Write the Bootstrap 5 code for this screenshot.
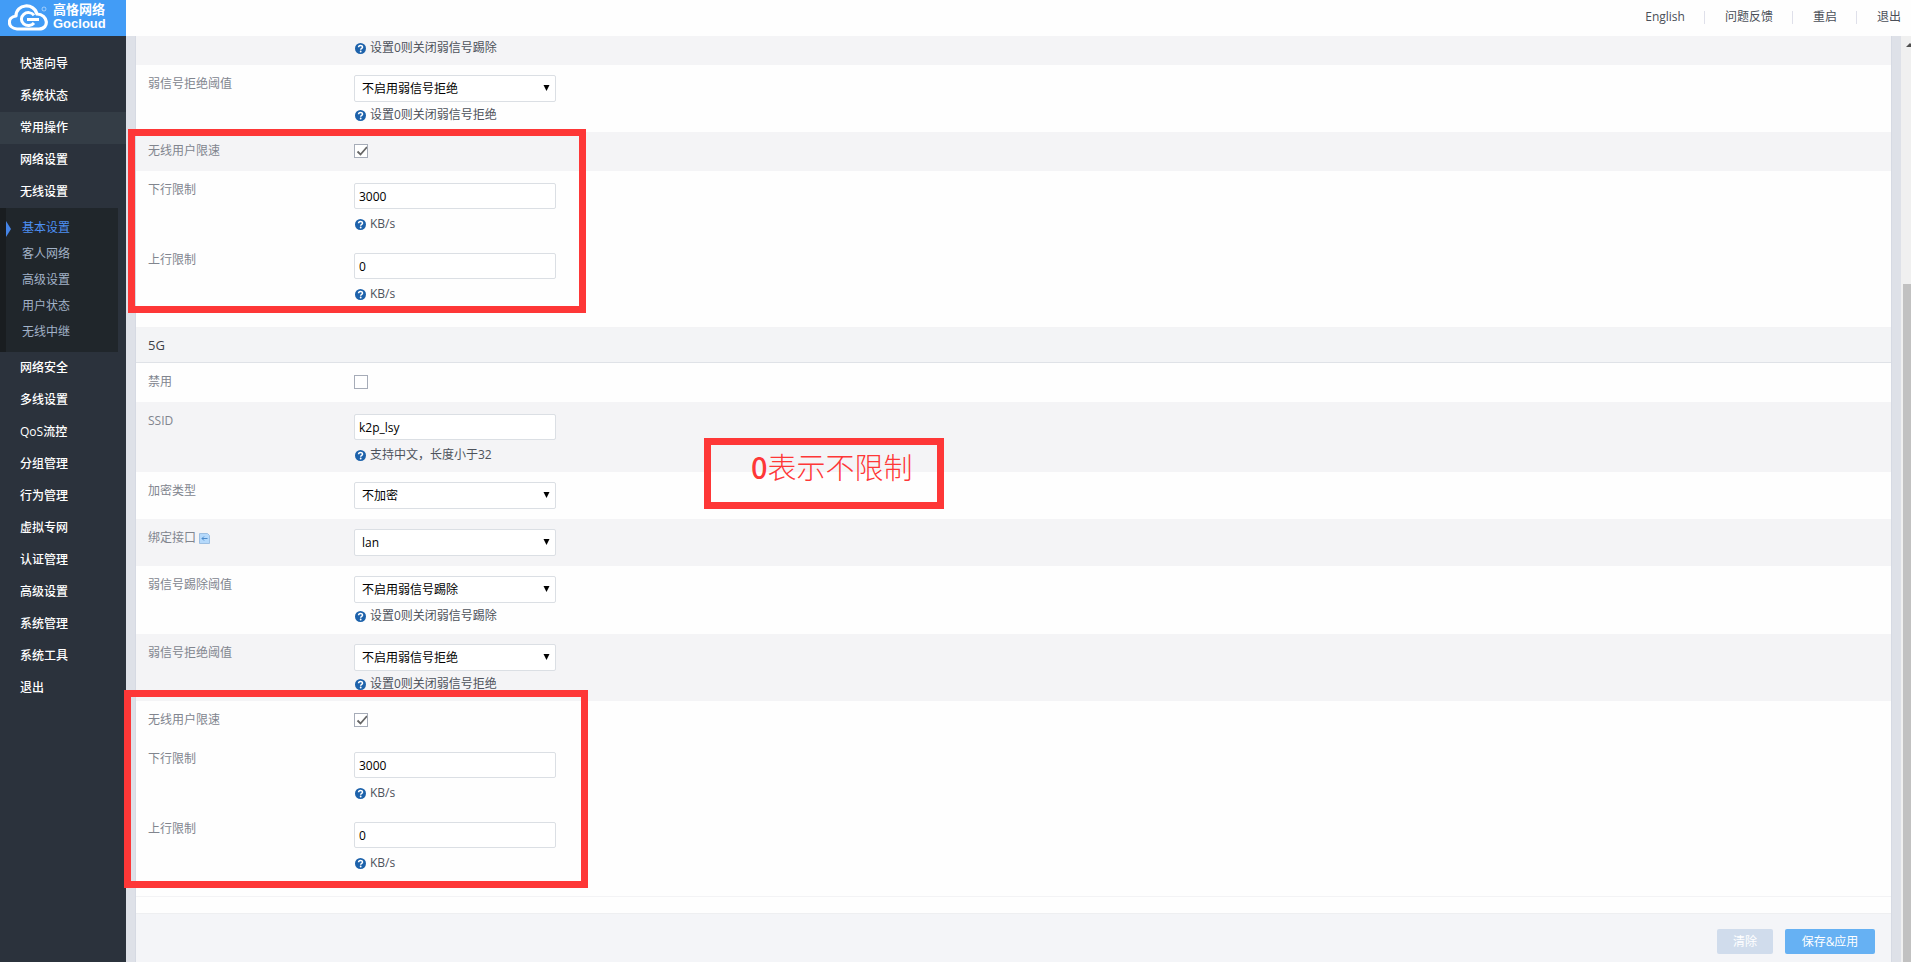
<!DOCTYPE html>
<html lang="zh-CN">
<head>
<meta charset="utf-8">
<meta name="viewport" content="width=device-width, initial-scale=1">
<title>高恪网络 - 无线设置</title>
<link rel="stylesheet" href="https://cdn.jsdelivr.net/npm/bootstrap@5.3.0/dist/css/bootstrap.min.css">
<style>
body{font-family:"Open Sans","Noto Sans CJK SC",sans-serif;font-size:12px;line-height:18px;color:#4a4f58;background:#dee1e8}
a{text-decoration:none;color:inherit}
.topbar{height:36px;background:#fefefe}
.logo{width:126px;height:36px;background:#429cf6;color:#fff;padding-left:8px;gap:5px}
.logo-text{font-family:"Liberation Sans","Noto Sans CJK SC",sans-serif;font-weight:700;font-size:13px;line-height:14px;padding-bottom:2px}
.logo-text span{display:block}
.top-links{padding-right:10px;height:34px}
.top-links a+a::before{content:"";display:inline-block;width:1px;height:13px;background:#dfe0ea;margin:0 20px 0 19px;vertical-align:-3px}
.sidebar{width:126px;background:#2b323c;padding-top:12px;color:#fff}
.sidebar .menu-item{display:block;line-height:32px;padding-left:20px;font-weight:500}
.sidebar .hot{background:#343d46}
.submenu{width:118px;background:#20262b;border-left:6px solid #191d20;padding:7px 0;color:#a2b2c8}
.submenu a{display:block;line-height:26px;padding-left:16px}
.submenu .current{color:#4d8ff2;position:relative}
.submenu .current::before{content:"";position:absolute;left:0;top:6px;border:8px solid transparent;border-left:5px solid #4585e8;border-right:0}
.page-body{margin:0 9px;background:#fefefe;border-left:1px solid #d6dae3;border-right:1px solid #d6dae3}
.sheet{background:#fefefe}
.field{display:flex;padding:10px 0 8px 12px}
.field.bare{padding-bottom:10px}
.field.tall{padding-bottom:9px}
.field.tick{padding:12px 0 13px 12px}
.field.entry{padding-top:12px}
.field.shade{background:#f4f4f6}
.field>label,.field>.lbl{width:206px;color:#81858e}
.field.entry>label,.field.tick>label{margin-top:-2px}
.field.tick>label{margin-bottom:-2px}
.field .form-control,.field .form-select{width:202px;font-size:12px;line-height:18px;border:1px solid #dbdfe4;border-radius:2px;color:#000;background-color:#fff}
.field .form-control{height:26px;min-height:0;padding:3px 4px}
.field .form-select{height:27px;padding:4px 20px 4px 7px;background-position:right 5px center;background-size:7px 7px;background-image:url("data:image/svg+xml,%3Csvg xmlns='http://www.w3.org/2000/svg' viewBox='0 0 7 7'%3E%3Cpath d='M.5 0h6L3.500 6z'/%3E%3C/svg%3E")}
.field .form-check-input{display:block;width:14px;height:14px;margin:0;border:1px solid #a6acb8;border-radius:0;background-color:#fff}
.field .form-check-input:checked{background-color:#fff;background-size:14px 14px;background-image:url("data:image/svg+xml,%3Csvg xmlns='http://www.w3.org/2000/svg' viewBox='0 0 14 14'%3E%3Cpath d='M3.500 7.500l3 3L13 3' fill='none' stroke='%23666' stroke-width='1.800'/%3E%3C/svg%3E")}
.help{display:flex;align-items:center;gap:4px;margin-top:4px;padding-left:1px;color:#4d525b}
.entry .help{margin-top:6px}
.help svg{width:11px;height:11px}
.clipped{padding:3px 0 8px 12px}
.clipped .help{margin-top:0}
.group-end{border-bottom:1px solid #f3f3f5;padding-bottom:16px}
.group-title{font-size:13px;line-height:34px;padding-left:12px;background:#f3f4f6;border-bottom:1px solid #dfe2e7;margin:0;font-weight:400;color:#3d4148}
.actions{background:#f4f5f8;border-top:1px solid #eeeff1;margin-top:16px;padding:15px 16px 0;gap:12px}
.actions .btn{font-size:12px;line-height:17px;padding:4px 16px;height:25px;border:0;border-radius:2px;color:#fff}
.actions .btn-clear{background:#d0dcec}
.actions .btn-save{background:#66b1f3;min-width:90px}
.scroller{width:10px;background:#f0f0f0;overflow:hidden}
.scroller svg{width:10px;height:14px;margin:2px 0 0 4px;flex:none}
.thumb{background:#c1c1c1;margin:232px 0 0 2px}
.marked{position:relative}
.frame{position:absolute;border:7px solid #fe3737;pointer-events:none}
.frame-top{left:-8px;top:-3px;width:458px;height:184px}
.frame-bottom{left:-12px;top:-11px;width:464px;height:198px}
.frame-note{left:568px;top:36px;width:240px;height:71px;padding-left:40px;color:#fe3737;font:300 29px/42px "Noto Sans CJK SC",sans-serif;white-space:nowrap}
.frame-note b{font-weight:500}
</style>
</head>
<body class="vh-100 d-flex flex-column overflow-hidden">
<svg class="d-none"><symbol id="q" viewBox="0 0 12 12"><circle cx="6" cy="6" r="6" fill="#1d62ab"/><path d="M3.900 4.700C3.900 2 8.200 2 8.200 4.500C8.200 6 6.200 5.800 6.200 7.400" fill="none" stroke="#fff" stroke-width="1.600"/><circle cx="6.200" cy="9.300" r="1" fill="#fff"/></symbol></svg>
<header class="topbar d-flex flex-shrink-0 justify-content-between">
  <a href="#" class="logo d-flex align-items-center">
    <svg width="40" height="28" viewBox="0 0 40 28" fill="none" stroke="#fff"><path d="M9 25C-1 24-1 13 8 12C8 0 26-2 29 10C40 10 42 25 31 25H9Z" stroke-width="3.200" stroke-linejoin="round"/><path d="M26 11.200A7 6.500 0 1 0 26 19" stroke-width="3"/><path d="M19 15.500H31" stroke-width="3"/><circle cx="36" cy="5" r="2" stroke-width=".7" opacity=".7"/></svg>
    <span class="logo-text"><span>高恪网络</span><span>Gocloud</span></span>
  </a>
  <nav class="top-links d-flex align-items-center"><a href="#">English</a><a href="#">问题反馈</a><a href="#">重启</a><a href="#">退出</a></nav>
</header>
<div class="d-flex flex-grow-1 overflow-hidden">
  <nav class="sidebar flex-shrink-0">
    <a class="menu-item" href="#">快速向导</a>
    <a class="menu-item" href="#">系统状态</a>
    <a class="menu-item hot" href="#">常用操作</a>
    <a class="menu-item" href="#">网络设置</a>
    <a class="menu-item" href="#">无线设置</a>
    <div class="submenu"><a class="current" href="#">基本设置</a><a href="#">客人网络</a><a href="#">高级设置</a><a href="#">用户状态</a><a href="#">无线中继</a></div>
    <a class="menu-item" href="#">网络安全</a>
    <a class="menu-item" href="#">多线设置</a>
    <a class="menu-item" href="#">QoS流控</a>
    <a class="menu-item" href="#">分组管理</a>
    <a class="menu-item" href="#">行为管理</a>
    <a class="menu-item" href="#">虚拟专网</a>
    <a class="menu-item" href="#">认证管理</a>
    <a class="menu-item" href="#">高级设置</a>
    <a class="menu-item" href="#">系统管理</a>
    <a class="menu-item" href="#">系统工具</a>
    <a class="menu-item" href="#">退出</a>
  </nav>
  <main class="page-body flex-grow-1 d-flex flex-column">
    <form class="sheet d-flex flex-column flex-grow-1">
      <div class="field shade clipped"><div class="lbl"></div><div class="help"><svg><use href="#q"/></svg>设置0则关闭弱信号踢除</div></div>
      <div class="field"><label for="rej2">弱信号拒绝阈值</label><div><select id="rej2" class="form-select"><option>不启用弱信号拒绝</option></select><div class="help"><svg><use href="#q"/></svg>设置0则关闭弱信号拒绝</div></div></div>
      <div class="marked group-end">
        <div class="field tick shade"><label for="lim2">无线用户限速</label><input id="lim2" type="checkbox" class="form-check-input" checked></div>
        <div class="field entry"><label for="down2">下行限制</label><div><input id="down2" type="text" class="form-control" value="3000"><div class="help"><svg><use href="#q"/></svg>KB/s</div></div></div>
        <div class="field entry"><label for="up2">上行限制</label><div><input id="up2" type="text" class="form-control" value="0"><div class="help"><svg><use href="#q"/></svg>KB/s</div></div></div>
        <div class="frame frame-top"></div>
      </div>
      <h2 class="group-title">5G</h2>
      <div class="field tick"><label for="off5">禁用</label><input id="off5" type="checkbox" class="form-check-input"></div>
      <div class="marked">
        <div class="field entry shade"><label for="ssid5">SSID</label><div><input id="ssid5" type="text" class="form-control" value="k2p_lsy"><div class="help"><svg><use href="#q"/></svg>支持中文，长度小于32</div></div></div>
        <div class="field bare"><label for="enc5">加密类型</label><div><select id="enc5" class="form-select"><option>不加密</option></select></div></div>
        <div class="frame frame-note"><b>0</b>表示不限制</div>
      </div>
      <div class="field bare shade"><label for="if5">绑定接口 <svg width="11" height="11" viewBox="0 0 11 11"><path d="M.5.5h8l2 2v8H.5z" fill="#b5d9fb" stroke="#9dbfe2"/><path d="M8.500 5.500H3M5 3.500L3 5.500L5 7.500" fill="none" stroke="#4a8acb"/></svg></label><div><select id="if5" class="form-select"><option>lan</option></select></div></div>
      <div class="field tall"><label for="kick5">弱信号踢除阈值</label><div><select id="kick5" class="form-select"><option>不启用弱信号踢除</option></select><div class="help"><svg><use href="#q"/></svg>设置0则关闭弱信号踢除</div></div></div>
      <div class="field shade"><label for="rej5">弱信号拒绝阈值</label><div><select id="rej5" class="form-select"><option>不启用弱信号拒绝</option></select><div class="help"><svg><use href="#q"/></svg>设置0则关闭弱信号拒绝</div></div></div>
      <div class="marked group-end">
        <div class="field tick"><label for="lim5">无线用户限速</label><input id="lim5" type="checkbox" class="form-check-input" checked></div>
        <div class="field entry"><label for="down5">下行限制</label><div><input id="down5" type="text" class="form-control" value="3000"><div class="help"><svg><use href="#q"/></svg>KB/s</div></div></div>
        <div class="field entry"><label for="up5">上行限制</label><div><input id="up5" type="text" class="form-control" value="0"><div class="help"><svg><use href="#q"/></svg>KB/s</div></div></div>
        <div class="frame frame-bottom"></div>
      </div>
      <div class="actions d-flex flex-grow-1 justify-content-end align-items-start"><button type="reset" class="btn btn-clear">清除</button><button type="submit" class="btn btn-save">保存&amp;应用</button></div>
    </form>
  </main>
  <div class="scroller d-flex flex-column flex-shrink-0"><svg viewBox="0 0 10 14"><path d="M1 9L5 5L9 9z" fill="#505050"/></svg><div class="thumb flex-grow-1"></div></div>
</div>
<script src="https://cdn.jsdelivr.net/npm/bootstrap@5.3.0/dist/js/bootstrap.bundle.min.js"></script>
</body>
</html>
